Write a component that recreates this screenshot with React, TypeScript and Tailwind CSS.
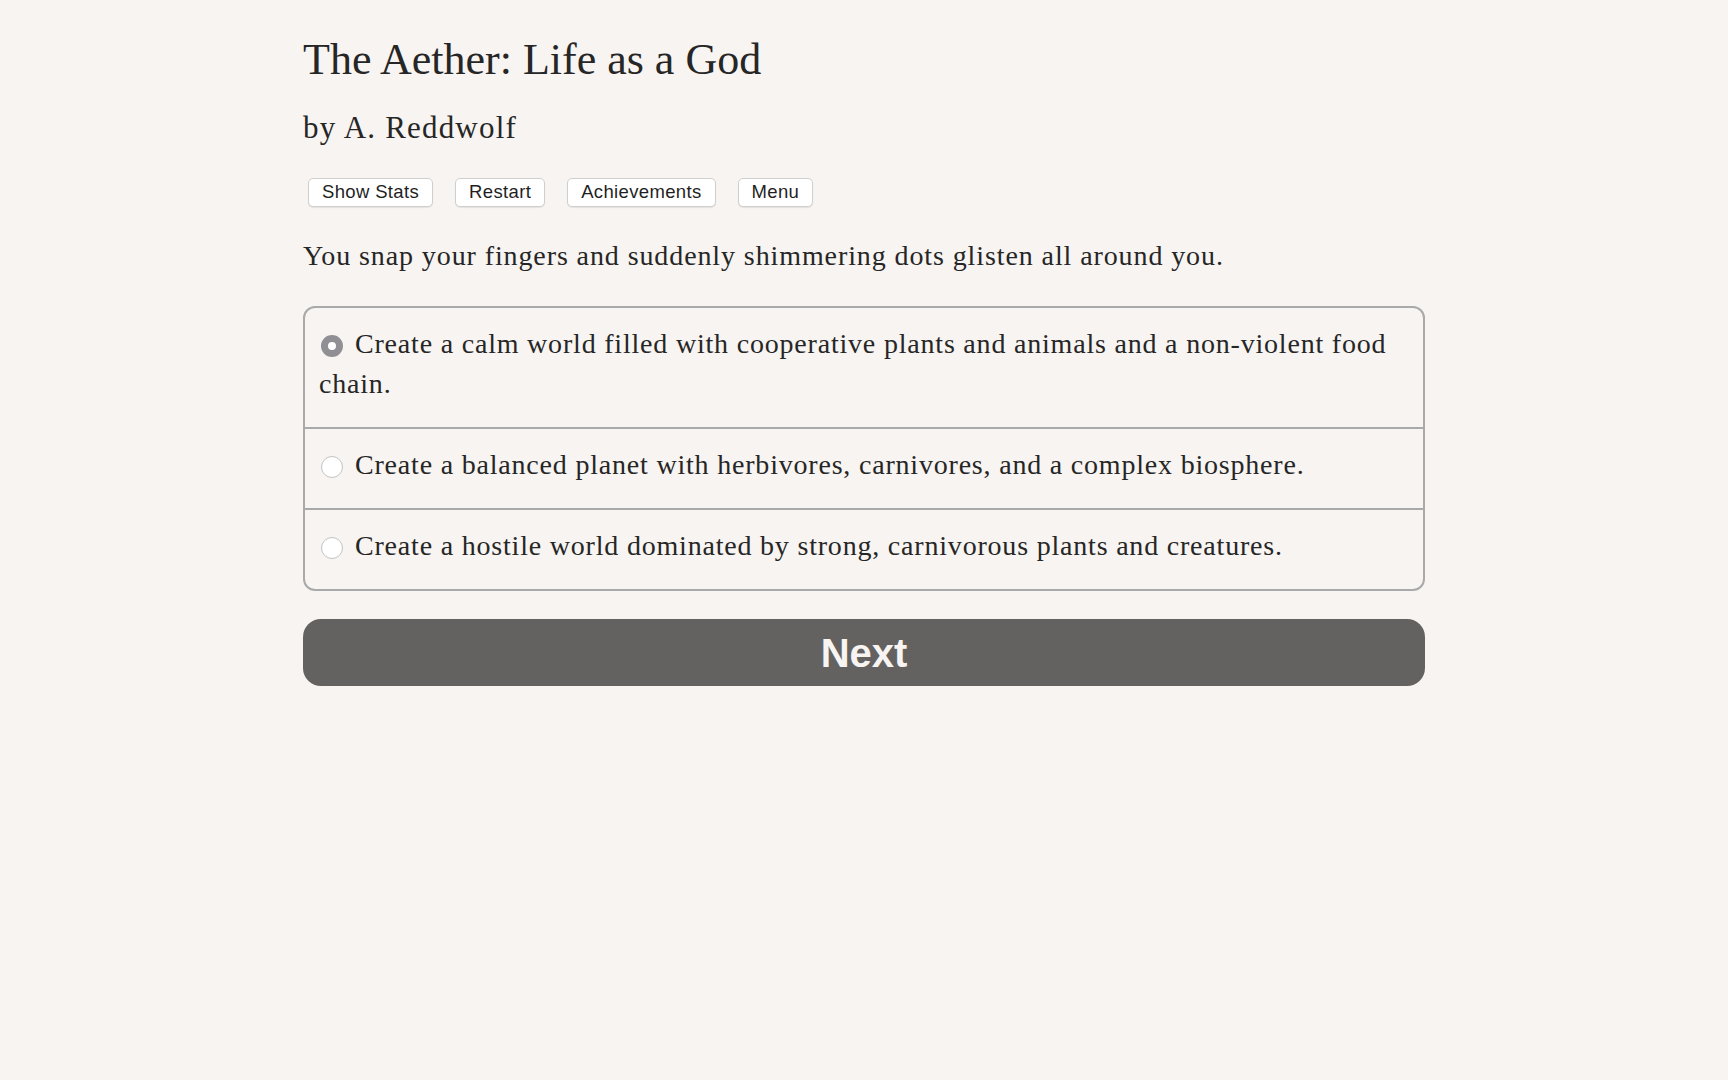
import React, { useState } from 'react';

const choices = [
    'Create a calm world filled with cooperative plants and animals and a non-violent food chain.',
    'Create a balanced planet with herbivores, carnivores, and a complex biosphere.',
    'Create a hostile world dominated by strong, carnivorous plants and creatures.'
];

const navButtons = ['Show Stats', 'Restart', 'Achievements', 'Menu'];

const serif = { fontFamily: '"Liberation Serif", "Times New Roman", serif' };
const sans = { fontFamily: '"Liberation Sans", Arial, sans-serif' };

export default function App() {
    const [selected, setSelected] = useState(0);

    return (
        <div className="min-h-screen bg-[#f7f4f1] text-[#262626]">
            <div className="mx-auto max-w-[1122px] pt-[35px]" style={serif}>
                {/* Header */}
                <h1 className="text-[44px] leading-[50px]">The Aether: Life as a God</h1>
                <h2 className="mt-[25px] text-[31px] leading-[36px] tracking-[1.2px]">by A. Reddwolf</h2>

                {/* Top buttons */}
                <div className="mt-[32px] flex gap-[22px] pl-[5px]">
                    {navButtons.map((label) => (
                        <button
                            key={label}
                            className="h-[29px] rounded-[5px] border border-[#cfcfcf] bg-white px-[13px] text-[18.5px] leading-none tracking-[0.35px] text-[#1f1f1f] shadow-[0_1px_1px_rgba(0,0,0,0.08)]"
                            style={sans}
                        >
                            {label}
                        </button>
                    ))}
                </div>

                <p className="mt-[29px] text-[28px] leading-[40px] tracking-[0.9px]">
                    You snap your fingers and suddenly shimmering dots glisten all around you.
                </p>

                {/* Choices */}
                <div className="mt-[30px] overflow-hidden rounded-[12px] border-2 border-[#a9a9a9]">
                    {choices.map((text, i) => (
                        <label
                            key={i}
                            onClick={() => setSelected(i)}
                            className={`block cursor-pointer pl-[14px] pr-[16px] pt-[16px] pb-[23px] text-[28px] leading-[40px] tracking-[0.8px] ${i > 0 ? 'border-t-2 border-[#a9a9a9]' : ''}`}
                        >
                            <span
                                className={`mr-[12px] ml-[2px] inline-block h-[22px] w-[22px] rounded-full bg-white align-[-4px] ${selected === i ? 'border-[7.5px] border-[#909094]' : 'border border-[#c4c4c4]'}`}
                            />
                            {text}
                        </label>
                    ))}
                </div>

                <button
                    className="mt-[28px] h-[67px] w-full rounded-[18px] bg-[#636260] text-[40px] font-bold text-[#f7f4f1]"
                    style={sans}
                >
                    Next
                </button>
            </div>
        </div>
    );
}
